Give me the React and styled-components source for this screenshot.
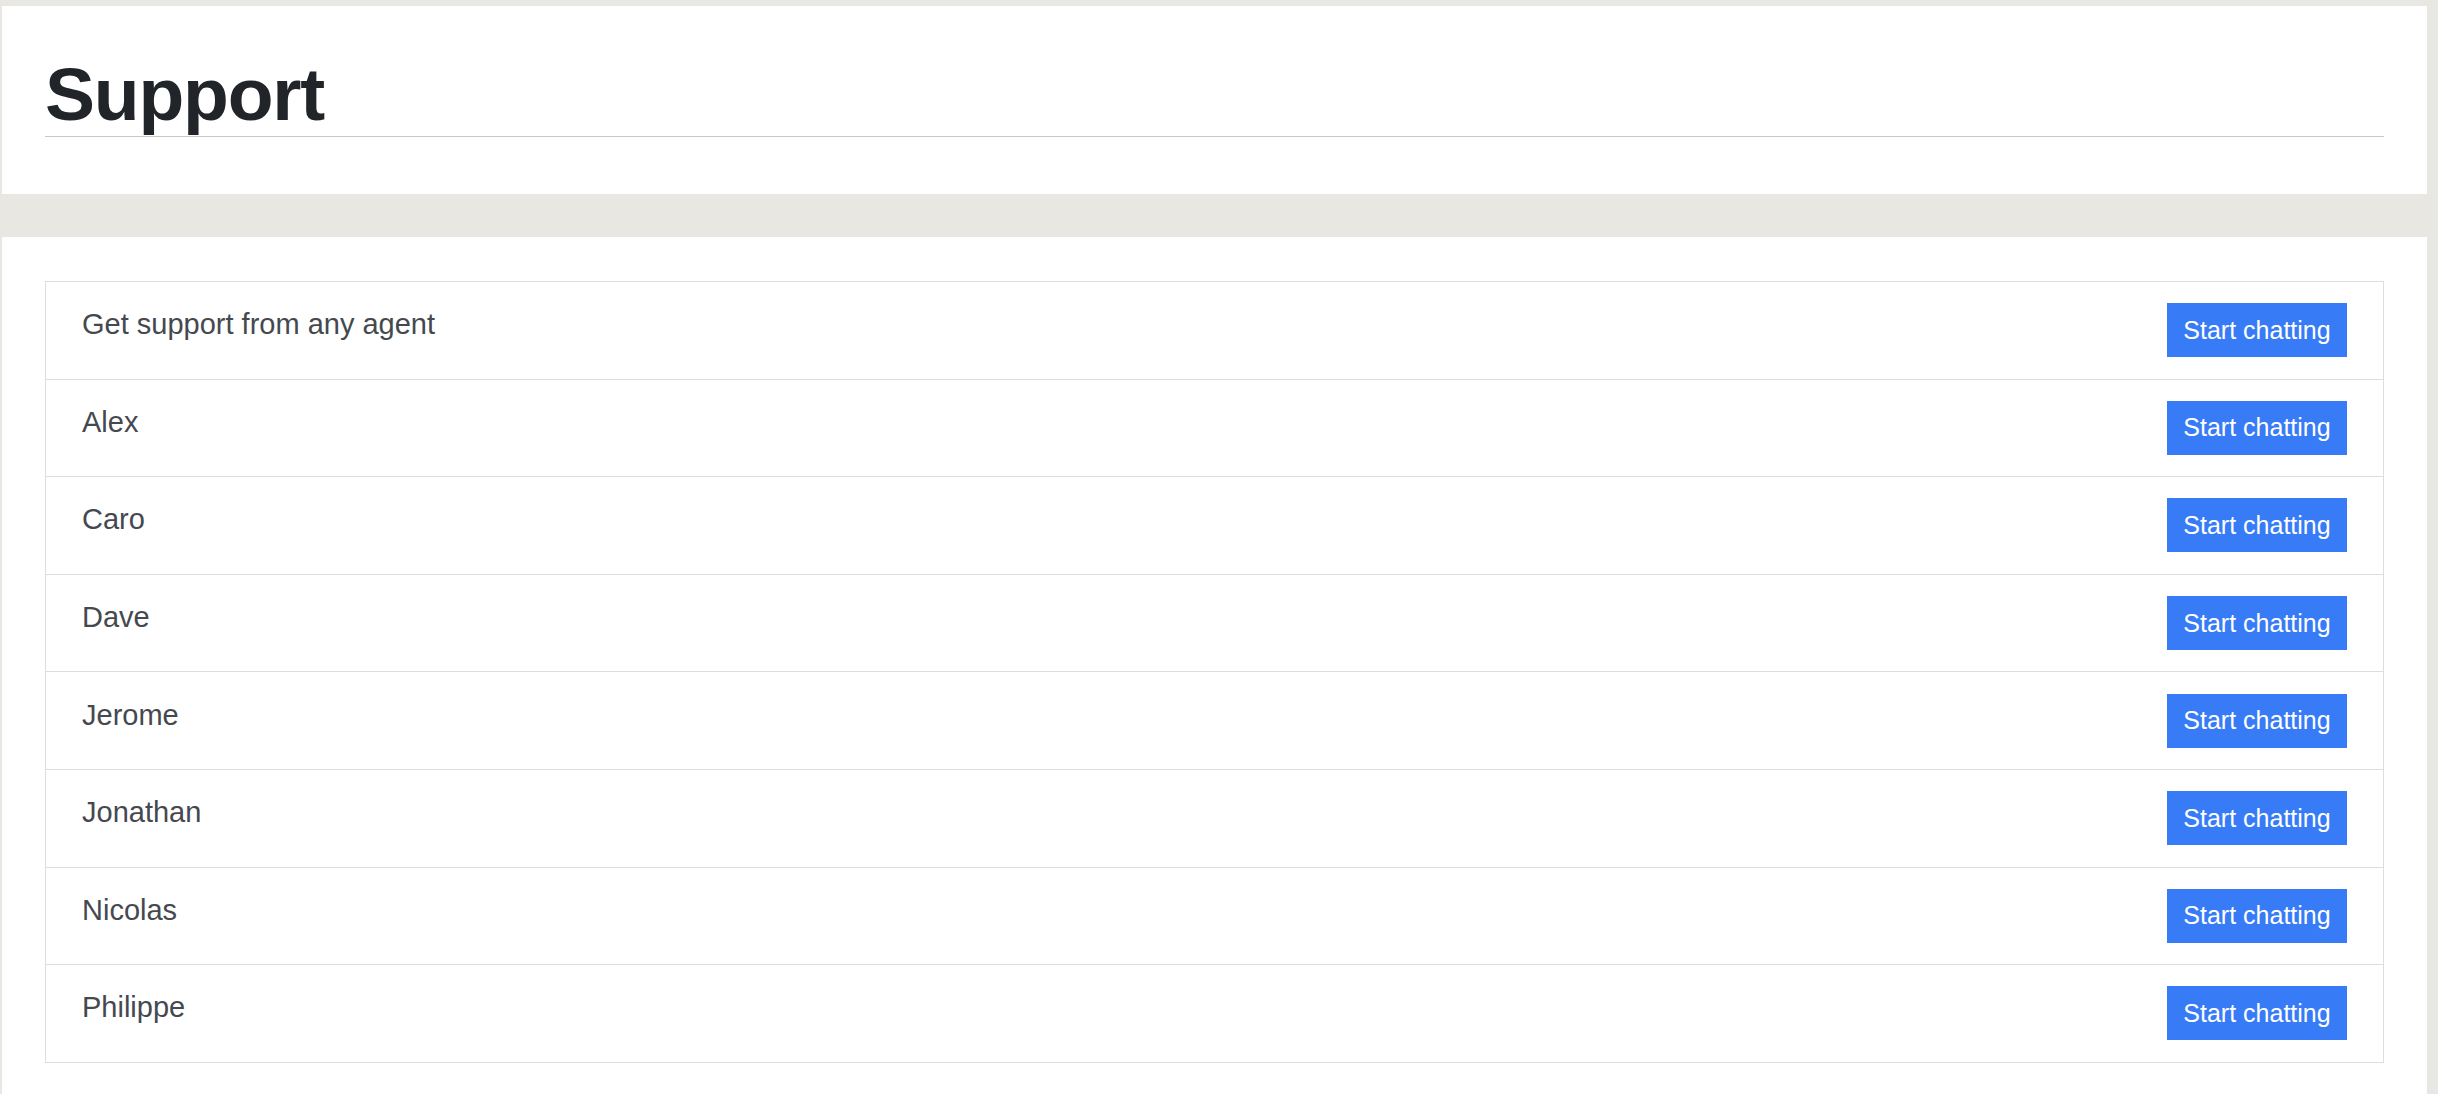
import React from 'react';
import styled, { createGlobalStyle } from 'styled-components';

const GlobalStyle = createGlobalStyle`
  html, body {
    margin: 0;
    padding: 0;
    background: #e8e7e2;
  }
  body {
    font-family: "Liberation Sans", Arial, Helvetica, sans-serif;
    color: #212529;
  }
`;

const Page = styled.div`
  display: flex;
  flex-direction: column;
  gap: 43px;
  padding: 6px 11px 0 2px;
  height: 1094px;
  box-sizing: border-box;
  overflow: hidden;
`;

const Card = styled.section`
  background: #ffffff;
  padding: ${(p) => p.$pad};
`;

const Title = styled.h1`
  margin: 0;
  padding-bottom: 5px;
  font-size: 75px;
  line-height: 74px;
  font-weight: 700;
  letter-spacing: -1.2px;
  color: #212529;
  border-bottom: 1px solid #c9c9c9;
`;

const AgentList = styled.ul`
  list-style: none;
  margin: 0;
  padding: 0;
  border: 1px solid #dddddd;
`;

const AgentRow = styled.li`
  display: flex;
  align-items: flex-start;
  justify-content: space-between;
  padding: 21.3px 36px;
  border-top: 1px solid #dddddd;
  &:first-child {
    border-top: 0;
  }
`;

const AgentName = styled.span`
  font-size: 29px;
  line-height: 42px;
  color: #45494f;
`;

const ChatButton = styled.button`
  height: 54px;
  width: 180px;
  padding: 0;
  border: 0;
  border-radius: 0;
  background: #377bf6;
  color: #ffffff;
  font-family: "Liberation Sans", Arial, sans-serif;
  font-size: 25px;
  cursor: pointer;
`;

const agents = [
  'Get support from any agent',
  'Alex',
  'Caro',
  'Dave',
  'Jerome',
  'Jonathan',
  'Nicolas',
  'Philippe',
];

const App = () => (
  <>
    <GlobalStyle />
    <Page>
      <Card $pad="51px 43px 57px">
        <Title>Support</Title>
      </Card>
      <Card $pad="44px 43px 60px">
        <AgentList>
          {agents.map((name) => (
            <AgentRow key={name}>
              <AgentName>{name}</AgentName>
              <ChatButton>Start chatting</ChatButton>
            </AgentRow>
          ))}
        </AgentList>
      </Card>
    </Page>
  </>
);

export default App;
